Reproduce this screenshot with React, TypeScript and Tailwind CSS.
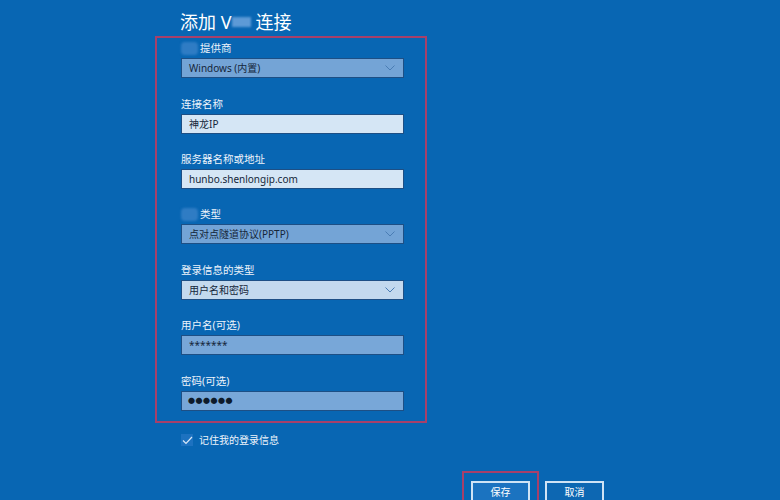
import React from "react";

const font = { fontFamily: '"Noto Sans", "Noto Sans CJK SC", sans-serif' };

function Chevron() {
  return (
    <svg width="10" height="6" viewBox="0 0 10 6" className="shrink-0">
      <path d="M0.5 0.5 L5 5 L9.5 0.5" fill="none" stroke="#4a7db4" strokeWidth="1" />
    </svg>
  );
}

function Label({ text, blob }: { text: string; blob?: boolean }) {
  return (
    <div className="flex items-center h-[14px] text-[10.5px] leading-[14px] text-[#eef4fb]">
      {blob && <span className="w-[17px] h-[13px] mr-[2px] rounded-[4px] bg-[#2f7cc4] blur-[1px]" />}
      <span>{text}</span>
    </div>
  );
}

function Select({ value, light }: { value: string; light?: boolean }) {
  return (
    <div
      className={`mt-[3px] h-[20px] w-[223px] flex items-center justify-between pl-[7px] pr-[8px] border border-[#1d4f85] text-[10px] text-[#14263a] ${
        light ? "bg-[#c3d9ee]" : "bg-[#74a4d6]"
      }`}
    >
      <span>{value}</span>
      <Chevron />
    </div>
  );
}

function Input({ value, tone }: { value: string; tone: "pale" | "mid" }) {
  return (
    <div
      className={`mt-[3px] h-[20px] w-[223px] flex items-center pl-[7px] border border-[#1d4f85] text-[10px] text-[#14263a] ${
        tone === "pale" ? "bg-[#d5e6f5]" : "bg-[#78a7d8]"
      }`}
    >
      {value}
    </div>
  );
}

export default function App() {
  return (
    <div className="w-[780px] h-[500px] bg-[#0866b3] overflow-hidden relative" style={font}>
      <div className="ml-[180px] pt-[9px] h-[35px] flex items-center text-[18px] leading-[22px] text-white">
        <span>添加 V</span>
        <span className="w-[19px] h-[10px] mx-[1px] bg-[#5d9ad6] blur-[1px]" />
        <span className="ml-[3px]">连接</span>
      </div>

      <div className="ml-[155px] mt-[1px] w-[272px] h-[387px] border-2 border-[#a8406a] pl-[24px] pt-[3px]">
        <div>
          <Label text="提供商" blob />
          <Select value="Windows (内置)" />
        </div>
        <div className="mt-[19px]">
          <Label text="连接名称" />
          <Input value="神龙IP" tone="pale" />
        </div>
        <div className="mt-[18px]">
          <Label text="服务器名称或地址" />
          <Input value="hunbo.shenlongip.com" tone="pale" />
        </div>
        <div className="mt-[18px]">
          <Label text="类型" blob />
          <Select value="点对点隧道协议(PPTP)" />
        </div>
        <div className="mt-[19px]">
          <Label text="登录信息的类型" />
          <Select value="用户名和密码" light />
        </div>
        <div className="mt-[18px]">
          <Label text="用户名(可选)" />
          <Input value="*******" tone="mid" />
        </div>
        <div className="mt-[19px]">
          <Label text="密码(可选)" />
          <div className="mt-[3px] h-[20px] w-[223px] flex items-center pl-[6px] border border-[#1d4f85] bg-[#78a7d8] text-[7px] tracking-[0.5px] text-[#0d1b2b]">
            ●●●●●●
          </div>
        </div>
      </div>

      <div className="ml-[181px] mt-[10px] flex items-center h-[14px]">
        <div className="w-[12px] h-[12px] bg-[#1d72c0] flex items-center justify-center">
          <svg width="11" height="9" viewBox="0 0 11 9">
            <path d="M1 4.5 L4 7.5 L10 1" fill="none" stroke="#d8e8f7" strokeWidth="1.2" />
          </svg>
        </div>
        <span className="ml-[6px] text-[10px] text-[#eef4fb]">记住我的登录信息</span>
      </div>

      <div className="ml-[462px] mt-[24px] flex items-start">
        <div className="border-2 border-[#a8406a] px-[7px] pt-[8px] h-[40px]">
          <div className="w-[59px] h-[21px] border-2 border-[#cfe3f5] bg-[#1b73c0] flex items-center justify-center text-[10px] leading-[12px] text-white">
            保存
          </div>
        </div>
        <div className="ml-[6px] mt-[10px] w-[59px] h-[21px] border-2 border-[#cfe3f5] bg-[#0d67b2] flex items-center justify-center text-[10px] leading-[12px] text-white">
          取消
        </div>
      </div>
    </div>
  );
}
